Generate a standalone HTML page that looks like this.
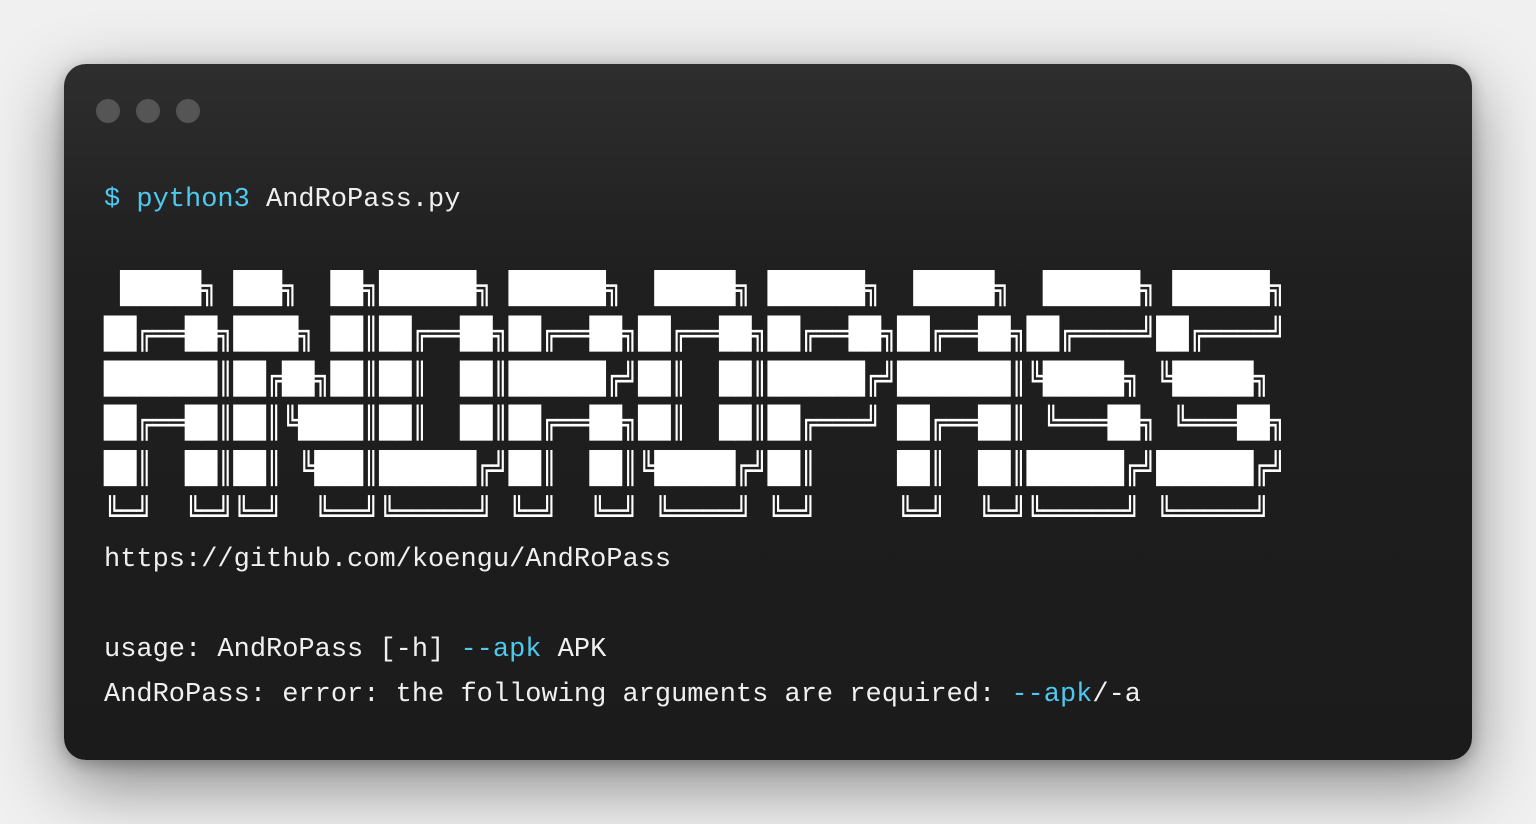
<!DOCTYPE html>
<html><head><meta charset="utf-8"><style>
html,body{margin:0;padding:0;}
body{width:1536px;height:824px;background:#f0f0f0;position:relative;overflow:hidden;}
.win{position:absolute;left:64px;top:64px;width:1408px;height:696px;border-radius:22px;
background:linear-gradient(180deg,#2e2e2e 0%,#1f1f1f 30%,#1b1b1b 100%);
box-shadow:0 24px 70px rgba(0,0,0,0.45),0 4px 16px rgba(0,0,0,0.25);}
.dot{position:absolute;top:35px;width:24px;height:24px;border-radius:50%;background:#555;}
.t{position:absolute;left:40px;margin:0;font-family:"Liberation Mono","DejaVu Sans Mono",monospace;
font-size:27px;line-height:45px;color:#f0f0f0;white-space:pre;}
.b{position:absolute;left:40px;top:203px;margin:0;font-family:"DejaVu Sans Mono",monospace;font-size:26.9px;
line-height:39.8px;color:#fff;white-space:pre;transform:scaleY(1.13);transform-origin:0 0;}
.c{color:#4fc8f0;}
</style></head><body>
<div class="win">
<div class="dot" style="left:32px"></div>
<div class="dot" style="left:72px"></div>
<div class="dot" style="left:112px"></div>
<div class="t" style="top:114px"><span class="c">$ python3</span> AndRoPass.py</div>
<pre class="b"> █████╗ ███╗  ██╗██████╗ ██████╗  █████╗ ██████╗  █████╗  ██████╗ ██████╗
██╔══██╗████╗ ██║██╔══██╗██╔══██╗██╔══██╗██╔══██╗██╔══██╗██╔════╝██╔════╝
███████║██╔██╗██║██║  ██║██████╔╝██║  ██║██████╔╝███████║╚█████╗ ╚█████╗ 
██╔══██║██║╚████║██║  ██║██╔══██╗██║  ██║██╔═══╝ ██╔══██║ ╚═══██╗ ╚═══██╗
██║  ██║██║ ╚███║██████╔╝██║  ██║╚█████╔╝██║     ██║  ██║██████╔╝██████╔╝
╚═╝  ╚═╝╚═╝  ╚══╝╚═════╝ ╚═╝  ╚═╝ ╚════╝ ╚═╝     ╚═╝  ╚═╝╚═════╝ ╚═════╝ </pre>
<div class="t" style="top:474px">https://github.com/koengu/AndRoPass</div>
<div class="t" style="top:564px">usage: AndRoPass [-h] <span class="c">--apk</span> APK</div>
<div class="t" style="top:609px">AndRoPass: error: the following arguments are required: <span class="c">--apk</span>/-a</div>
</div>
</body></html>
